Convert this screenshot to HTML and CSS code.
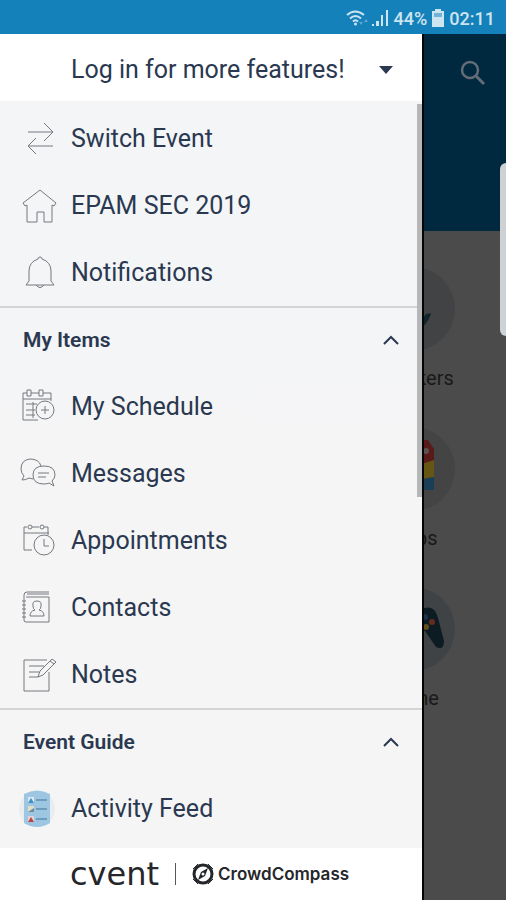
FILE: index.html
```html
<!DOCTYPE html>
<html lang="en">
<head>
    <meta charset="utf-8">
    <meta name="viewport" content="width=device-width, initial-scale=1">
    <title>EPAM SEC 2019</title>
    <link rel="stylesheet" href="styles.css">
</head>
<body>
    <div class="status-bar">
        <svg class="status-wifi" viewBox="0 0 24 18" aria-hidden="true">
            <path d="M1 6Q9-1 18 6M4 9.500Q9.500 4.500 15 9.500M7 12.500Q9.500 10 12 12.500" fill="none" stroke="currentColor" stroke-width="2"/>
            <circle cx="9.500" cy="15" r="1.500" fill="currentColor"/>
            <path d="M13 13h4l-2 3zM18 13l2-3 2 3z" fill="currentColor" opacity=".4"/>
        </svg>
        <svg class="status-signal" viewBox="0 0 18 18" aria-hidden="true">
            <path d="M1 15h2v2H1zM5 12h3v5H5zM10 6h2v11h-2zM15 1h2v16h-2z" fill="currentColor"/>
        </svg>
        <span>44%</span>
        <svg class="status-battery" viewBox="0 0 12 18" aria-hidden="true">
            <path d="M3 0h6v2h3v16H0V2h3z" fill="currentColor"/>
            <path d="M2 4h8v4H2z" fill="#1581ba" opacity=".5"/>
        </svg>
        <span>02:11</span>
    </div>

    <div class="screen">
        <main class="page">
            <header class="page-header">
                <button class="search" type="button" aria-label="Search">
                    <svg viewBox="0 0 28 28" aria-hidden="true">
                        <circle cx="11" cy="11" r="8" fill="none" stroke="currentColor" stroke-width="2.500"/>
                        <path d="M17 17l8 8" stroke="currentColor" stroke-width="3"/>
                    </svg>
                </button>
            </header>
            <div class="tiles">
                <a class="tile" href="#">
                    <svg viewBox="0 0 84 84" aria-hidden="true">
                        <circle cx="42" cy="42" r="42" fill="#424344"/>
                        <path d="M40 64Q56 62 60 46l-5 1-6 8-8-2z" fill="#10252c"/>
                    </svg>
                    <span>Speakers</span>
                </a>
                <a class="tile" href="#">
                    <svg viewBox="0 0 84 84" aria-hidden="true">
                        <circle cx="42" cy="42" r="42" fill="#444"/>
                        <path d="M35 13h22l6 9v16H35z" fill="#591a19"/>
                        <path d="M35 42l28-9v17l-28 6z" fill="#665614"/>
                        <path d="M35 55l28-5v13H35z" fill="#193f57"/>
                        <circle cx="55" cy="24" r="3" fill="#5b5150"/>
                    </svg>
                    <span>Maps</span>
                </a>
                <a class="tile" href="#">
                    <svg viewBox="0 0 84 84" aria-hidden="true">
                        <circle cx="42" cy="42" r="42" fill="#404345"/>
                        <path d="M20 21Q10 22 8 38L6 54q1 10 8 5l14-15h26l11 16q8 4 8-6L67 31Q64 18 54 21z" fill="#0d1b22"/>
                        <circle cx="54" cy="30" r="3" fill="#1e3149"/>
                        <circle cx="61" cy="35" r="3" fill="#632c1e"/>
                        <circle cx="55" cy="40" r="3" fill="#654b1a"/>
                    </svg>
                    <span>Game</span>
                </a>
            </div>
        </main>
        <div class="edge-handle"></div>

        <aside class="drawer">
            <button class="login" type="button">
                <span>Log in for more features!</span>
                <svg viewBox="0 0 14 8" aria-hidden="true"><path d="M0 0h14L7 8z" fill="currentColor"/></svg>
            </button>

            <nav class="menu">
                <a class="menu-item" href="#">
                    <svg viewBox="0 0 36 36" aria-hidden="true">
                        <path d="M7 11h25M23 2l9 9-9 9M32 25H7M15 17l-8 8 8 8"/>
                    </svg>
                    Switch Event
                </a>
                <a class="menu-item" href="#">
                    <svg viewBox="0 0 36 36" aria-hidden="true">
                        <path d="M19 2L35 15l-2 3-2-1v17h-8V24h-7v10H6V17l-2 1-2-3z"/>
                    </svg>
                    EPAM SEC 2019
                </a>
                <a class="menu-item" href="#">
                    <svg viewBox="0 0 36 36" aria-hidden="true">
                        <path d="M17 4q0-2 2-2t2 2q9 3 9 12v10l3 4H5l3-4V16q0-9 9-12zM15 30q4 5 8 0"/>
                    </svg>
                    Notifications
                </a>

                <button class="section" type="button" aria-expanded="true">
                    My Items
                    <svg viewBox="0 0 18 10" aria-hidden="true"><path d="M2 9l7-7 7 7"/></svg>
                </button>
                <a class="menu-item" href="#">
                    <svg viewBox="0 0 36 36" aria-hidden="true">
                        <path d="M6 4H2v27h15M10 4h8M22 4h8v8M2 10h28M6 1h4v6H6zM18 1h4v6h-4zM5 15h11M5 21h9M5 26h9M12 13v16"/>
                        <circle cx="24" cy="21" r="9"/>
                        <path d="M20 21h8M24 17v8"/>
                    </svg>
                    My Schedule
                </a>
                <a class="menu-item" href="#">
                    <svg viewBox="0 0 36 36" aria-hidden="true">
                        <path d="M20 10Q18 3 9 3 0 4 0 13q0 4 3 7l-2 4q4 0 7-2l4 1"/>
                        <path d="M23 10q-11 0-11 9t11 9q3 0 5-1l5 3-2-5q3-3 3-6 0-9-11-9zM17 17h11M17 21h8"/>
                    </svg>
                    Messages
                </a>
                <a class="menu-item" href="#">
                    <svg viewBox="0 0 36 36" aria-hidden="true">
                        <path d="M6 4H3v23h8M11 4h7M23 4h4v8M3 10h25"/>
                        <circle cx="9" cy="4" r="2"/>
                        <circle cx="21" cy="4" r="2"/>
                        <circle cx="23" cy="22" r="10"/>
                        <path d="M23 16v7h5"/>
                    </svg>
                    Appointments
                </a>
                <a class="menu-item" href="#">
                    <svg viewBox="0 0 36 36" aria-hidden="true">
                        <path d="M28 2H6q-3 0-3 3v25q0 2 2 2h23V7H5M6 4h22"/>
                        <path d="M1 11h4M1 15h4M1 19h4M1 23h4M1 27h4"/>
                        <path d="M16 11q-5 0-4 5 0 3 2 4-5 1-5 6h14q0-5-5-6 2-1 2-4 1-5-4-5z"/>
                    </svg>
                    Contacts
                </a>
                <a class="menu-item" href="#">
                    <svg viewBox="0 0 36 36" aria-hidden="true">
                        <path d="M26 3H3v31h25V15M8 9h15M8 15h10M8 20h9"/>
                        <path d="M17 20l2-6L31 2l4 3-13 13zM29 4l4 3"/>
                    </svg>
                    Notes
                </a>

                <button class="section" type="button" aria-expanded="true">
                    Event Guide
                    <svg viewBox="0 0 18 10" aria-hidden="true"><path d="M2 9l7-7 7 7"/></svg>
                </button>
                <a class="menu-item" href="#">
                    <svg class="feed-icon" viewBox="0 0 36 38" aria-hidden="true">
                        <circle cx="16" cy="19" r="18" fill="#e9edf0"/>
                        <path d="M3 4Q16-3 29 4v29q-13 8-26 0z" fill="#9cc6e1"/>
                        <path d="M7 7h6v6H7z" fill="#d8e9f4"/>
                        <path d="M7 16h6v6H7z" fill="#dedfc5"/>
                        <path d="M7 26h6v6H7z" fill="#dfd4d8"/>
                        <path d="M7 13l3-5 3 5z" fill="#438fc4"/>
                        <path d="M7 22l6-4v4z" fill="#688f9b"/>
                        <path d="M7 32l3-5 3 5z" fill="#bd4546"/>
                        <path d="M15 10h11M15 19h11M15 29h11" stroke="#6e9cba" stroke-width="2"/>
                    </svg>
                    Activity Feed
                </a>
            </nav>

            <footer class="brands">
                <span class="cvent">cvent</span>
                <span class="divider"></span>
                <svg viewBox="0 0 22 22" aria-hidden="true">
                    <circle cx="11" cy="11" r="9" fill="none" stroke="currentColor" stroke-width="3"/>
                    <path d="M6 1L1 6M16 1l5 5M1 16l5 5M21 16l-5 5" stroke="currentColor" stroke-width="1"/>
                    <path d="M16 5L9 9l-3 8 7-4z" fill="currentColor"/>
                    <circle cx="11" cy="11" r="1.500" fill="#fff"/>
                </svg>
                <span class="crowdcompass">CrowdCompass</span>
            </footer>
        </aside>
    </div>
</body>
</html>
```
FILE: styles.css
```css
* {
    box-sizing: border-box;
}
body {
    margin: 0;
    height: 100vh;
    display: flex;
    flex-direction: column;
    overflow: hidden;
    font-family: Roboto, sans-serif;
    color: #2a3850;
    background-color: #4b4b4b;
}
button {
    border: 0;
    padding: 0;
    background: none;
    font: inherit;
    color: inherit;
    text-align: left;
}
a {
    color: inherit;
    text-decoration: none;
}
.status-bar {
    display: flex;
    align-items: center;
    justify-content: flex-end;
    gap: 5px;
    height: 34px;
    padding: 2px 11px 0 0;
    background-color: #1581ba;
    color: #cde4f1;
    font-size: 18px;
    font-weight: 500;
}
.status-wifi {
    width: 24px;
    height: 18px;
}
.status-signal {
    width: 18px;
    height: 18px;
    margin-left: -4px;
}
.status-battery {
    width: 12px;
    height: 18px;
}
.screen {
    position: relative;
    flex: 1;
    min-height: 0;
}

/* page under the drawer, already dimmed */
.page-header {
    display: flex;
    justify-content: flex-end;
    align-items: flex-start;
    height: 197px;
    padding: 25px 19px;
    background-color: #00293f;
}
.search {
    color: #626d76;
}
.search svg {
    display: block;
    width: 28px;
    height: 28px;
}
.tiles {
    display: grid;
    grid-template-columns: repeat(3, 1fr);
    row-gap: 31px;
    padding: 36px 14px 36px 16px;
    color: #191919;
}
.tile {
    grid-column: 3;
    display: flex;
    flex-direction: column;
    align-items: center;
    gap: 9px;
    font-size: 20px;
    line-height: 36px;
}
.tile svg {
    width: 84px;
    height: 84px;
}
.edge-handle {
    position: absolute;
    top: 129px;
    right: 0;
    width: 6px;
    height: 173px;
    border-radius: 6px 0 0 6px;
    background-color: #cfd2d4;
}

.drawer {
    position: absolute;
    top: 0;
    bottom: 0;
    left: 0;
    width: calc(100% - 82px);
    display: flex;
    flex-direction: column;
    border-right: 2px solid #050505;
    background-color: #fff;
}
.login {
    display: flex;
    align-items: center;
    justify-content: space-between;
    height: 67px;
    padding: 4px 29px 0 71px;
    font-size: 25px;
}
.login svg {
    width: 14px;
    height: 8px;
}
.menu {
    position: relative;
    flex: 1;
    min-height: 0;
    overflow: hidden;
    padding-top: 4px;
    background: linear-gradient(#f3f5f7, #f5f5f6 50%);
}
/* scroll thumb */
.menu::after {
    content: "";
    position: absolute;
    top: 3px;
    right: 0;
    width: 5px;
    height: 393px;
    background-color: #b5b7b8;
}
.menu-item {
    display: flex;
    align-items: center;
    gap: 14px;
    height: 67px;
    padding-left: 21px;
    font-size: 25px;
}
.menu-item svg {
    width: 36px;
    height: 36px;
    fill: none;
    stroke: #74797f;
    stroke-width: 1;
    overflow: visible;
}
.menu-item .feed-icon {
    height: 38px;
    stroke: none;
}
.section {
    display: flex;
    align-items: center;
    justify-content: space-between;
    width: 100%;
    height: 67px;
    padding: 0 22px 2px 23px;
    border-top: 2px solid #d3d4d6;
    font-size: 21px;
    font-weight: 600;
}
.section svg {
    width: 18px;
    height: 10px;
    fill: none;
    stroke: currentColor;
    stroke-width: 2;
}
.brands {
    display: flex;
    align-items: center;
    height: 52px;
    padding-left: 70px;
    color: #25272a;
}
.brands svg {
    width: 22px;
    height: 22px;
    margin-right: 4px;
}
.cvent {
    font-family: "DejaVu Sans", sans-serif;
    font-size: 32px;
    line-height: 32px;
}
.divider {
    width: 1px;
    height: 22px;
    margin: 0 16px;
    background-color: #55585b;
}
.crowdcompass {
    font-family: Inter, sans-serif;
    font-size: 17px;
    font-weight: 600;
}
```
